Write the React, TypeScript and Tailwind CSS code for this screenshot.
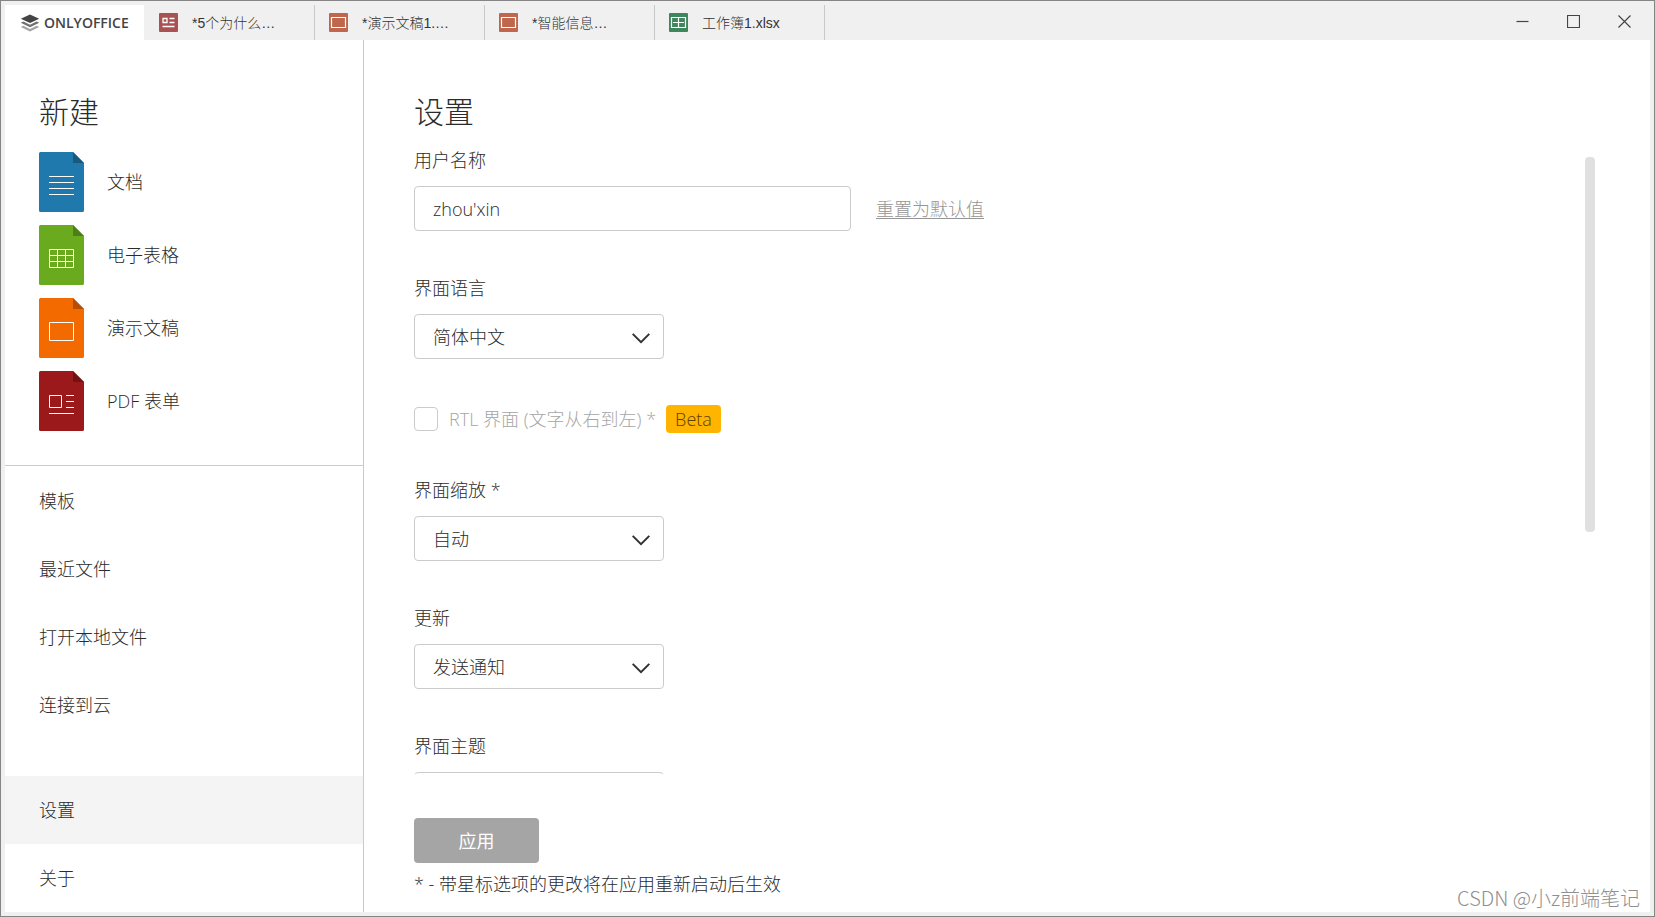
import { useState } from "react";
import type { ReactNode } from "react";

type DocKind = "word" | "sheet" | "slide" | "pdf";

const DOC_COLORS: Record<DocKind, { page: string; fold: string; tab: string }> = {
  word: { page: "#2079ad", fold: "#18597f", tab: "#446995" },
  sheet: { page: "#6aaa1f", fold: "#4e7e17", tab: "#40865c" },
  slide: { page: "#f36a00", fold: "#b34e04", tab: "#bf664c" },
  pdf: { page: "#9b191b", fold: "#701313", tab: "#aa5252" },
};

const TABS: { kind: DocKind; title: string }[] = [
  { kind: "pdf", title: "*5个为什么…" },
  { kind: "slide", title: "*演示文稿1.…" },
  { kind: "slide", title: "*智能信息…" },
  { kind: "sheet", title: "工作簿1.xlsx" },
];

const NEW_ITEMS: { kind: DocKind; label: string }[] = [
  { kind: "word", label: "文档" },
  { kind: "sheet", label: "电子表格" },
  { kind: "slide", label: "演示文稿" },
  { kind: "pdf", label: "PDF 表单" },
];

const NAV_ITEMS = ["模板", "最近文件", "打开本地文件", "连接到云"];
const BOTTOM_ITEMS = ["设置", "关于"];

function Logo() {
  return (
    <svg width="20" height="18" viewBox="0 0 20 18" aria-hidden>
      <path d="M10 9 .8 4.800 10 .4l9.200 4.400z" fill="#444" />
      <path d="M.8 8.800 3.400 7.600 10 10.700l6.600-3.100 2.600 1.200L10 13.200z" fill="#6f6f6f" />
      <path d="M.8 13 3.400 11.800 10 14.900l6.600-3.100 2.600 1.200L10 17.500z" fill="#a3a3a3" />
    </svg>
  );
}

function DocIcon({ kind }: { kind: DocKind }) {
  const { page, fold } = DOC_COLORS[kind];
  return (
    <svg width="45" height="60" viewBox="0 0 45 60" className="shrink-0" aria-hidden>
      <path d="M1.500 0H34l11 11v47.500a1.500 1.500 0 0 1-1.500 1.500h-42A1.500 1.500 0 0 1 0 58.500v-57A1.500 1.500 0 0 1 1.500 0z" fill={page} />
      <path d="M34 0l11 11H34z" fill={fold} />
      <g fill="none" stroke="#fff" strokeWidth="1">
        {kind === "word" && <path d="M10 24.500h25M10 30.500h25M10 36.500h25M10 42.500h25" />}
        {kind === "sheet" && <path d="M10.500 24.500h24v18h-24zM10 30.500h25M10 36.500h25M18.500 24v19M26.500 24v19" />}
        {kind === "slide" && <path d="M10.500 24.500h24v18h-24z" />}
        {kind === "pdf" && <path d="M10.500 24.500h12v12h-12zM27 24.500h8M27 30.500h8M27 36.500h8M10 42.500h25" />}
      </g>
    </svg>
  );
}

function TabIcon({ kind }: { kind: DocKind }) {
  return (
    <svg width="19" height="19" viewBox="0 0 19 19" className="shrink-0" aria-hidden>
      <rect width="19" height="19" rx="1" fill={DOC_COLORS[kind].tab} />
      <g fill="none" stroke="#fff">
        {kind === "slide" && <path d="M2.500 4.500h14v10h-14z" strokeWidth="1.200" />}
        {kind === "sheet" && <path d="M2.500 4.500h14v10h-14zM4 9.500h11M9.500 5v9" strokeWidth="1.200" />}
        {kind === "pdf" && (
          <path d="M4 5.500h4v4H4zM10.500 5.500h5M10.500 9.500h5M3.500 13.500h12" strokeWidth="1.300" />
        )}
      </g>
    </svg>
  );
}

function TitleBar() {
  return (
    <header className="flex h-[35px] shrink-0 text-[#444]">
      <button className="mr-px flex w-[139px] shrink-0 items-center bg-white pl-[15px]">
        <Logo />
        <span className="ml-1 font-['Open_Sans',sans-serif] text-sm font-semibold">ONLYOFFICE</span>
      </button>
      <nav className="flex min-w-0">
        {TABS.map((tab) => (
          <button
            key={tab.title}
            className="flex w-[170px] items-center gap-[14px] border-r border-[#c8c8c8] pl-[14px] font-['Liberation_Sans','Noto_Sans_CJK_SC',sans-serif] text-sm font-light whitespace-nowrap text-[#333]"
          >
            <TabIcon kind={tab.kind} />
            <span>{tab.title}</span>
          </button>
        ))}
      </nav>
      <div className="ml-auto flex">
        <WindowButton label="最小化">
          <path d="M.5 6.500h12" />
        </WindowButton>
        <WindowButton label="最大化">
          <path d="M.5.5h12v12H.5z" />
        </WindowButton>
        <WindowButton label="关闭">
          <path d="M.5.5l12 12M12.500.5l-12 12" />
        </WindowButton>
      </div>
    </header>
  );
}

function WindowButton({ label, children }: { label: string; children: ReactNode }) {
  return (
    <button aria-label={label} className="flex w-[51px] items-center justify-center pb-0.5">
      <svg width="13" height="13" viewBox="0 0 13 13" fill="none" stroke="#444" strokeWidth="1.200" aria-hidden>
        {children}
      </svg>
    </button>
  );
}

function Sidebar({ active, onSelect }: { active: string; onSelect: (item: string) => void }) {
  const renderItem = (item: string) => (
    <button
      key={item}
      onClick={() => onSelect(item)}
      className={`flex h-[68px] w-full shrink-0 items-center pl-[34px] text-left ${item === active ? "bg-[#f4f4f4]" : ""}`}
    >
      {item}
    </button>
  );

  return (
    <aside className="flex w-[359px] shrink-0 flex-col border-r border-[#cbcbcb]">
      <section className="flex flex-col border-b border-[#cbcbcb] pt-[50px] pb-[34px] pl-[34px]">
        <h2 className="mb-[18px] text-[30px] leading-[44px]">新建</h2>
        <div className="flex flex-col gap-[13px]">
          {NEW_ITEMS.map((item) => (
            <button key={item.kind} className="flex items-center gap-[23px] text-left">
              <DocIcon kind={item.kind} />
              <span>{item.label}</span>
            </button>
          ))}
        </div>
      </section>
      <nav className="flex flex-1 flex-col pt-px">
        {NAV_ITEMS.map(renderItem)}
        <div className="mt-auto">{BOTTOM_ITEMS.map(renderItem)}</div>
      </nav>
    </aside>
  );
}

function SelectField({ id, label, options }: { id: string; label: string; options: string[] }) {
  return (
    <div className="flex shrink-0 flex-col items-start gap-[15px]">
      <label htmlFor={id}>{label}</label>
      <div className="relative w-[250px]">
        <select id={id} className="h-[45px] w-full appearance-none rounded-sm border border-[#cbcbcb] bg-white pl-[18px]">
          {options.map((option) => (
            <option key={option}>{option}</option>
          ))}
        </select>
        <svg
          width="18"
          height="11"
          viewBox="0 0 18 11"
          fill="none"
          stroke="#333"
          strokeWidth="2"
          className="pointer-events-none absolute top-[19px] right-[14px]"
          aria-hidden
        >
          <path d="M.7.900 9 9.200 17.300.9" />
        </svg>
      </div>
    </div>
  );
}

function Settings() {
  const [userName, setUserName] = useState("zhou'xin");

  return (
    <main className="flex min-w-0 flex-1 flex-col pt-[50px] pl-[50px]">
      <h1 className="mb-[15px] text-[30px] leading-[44px]">设置</h1>
      <div className="flex min-h-0 flex-1 pr-[55px]">
        <div className="flex flex-1 flex-col gap-[46px] overflow-y-auto [scrollbar-width:none]">
          <div className="flex shrink-0 flex-col items-start gap-[15px]">
            <label htmlFor="user-name">用户名称</label>
            <div className="flex items-center gap-[25px]">
              <input
                id="user-name"
                value={userName}
                onChange={(e) => setUserName(e.target.value)}
                className="h-[45px] w-[437px] rounded-sm border border-[#cbcbcb] px-[18px]"
              />
              <a href="#" className="text-[#959595] underline underline-offset-2">
                重置为默认值
              </a>
            </div>
          </div>
          <SelectField id="language" label="界面语言" options={["简体中文", "English"]} />
          <div className="flex h-7 shrink-0 items-center">
            <input
              id="rtl"
              type="checkbox"
              disabled
              className="size-6 appearance-none rounded-sm border border-[#cbcbcb]"
            />
            <label htmlFor="rtl" className="ml-[11px] text-[#a5a5a5]">
              RTL 界面 (文字从右到左) *
            </label>
            <span className="ml-[10px] rounded-sm bg-[#ffb400] px-[9px] leading-7 text-[#5f4300]">Beta</span>
          </div>
          <SelectField id="scale" label="界面缩放 *" options={["自动", "100%", "150%", "200%"]} />
          <SelectField id="updates" label="更新" options={["发送通知", "自动安装", "从不"]} />
          <SelectField id="theme" label="界面主题" options={["与系统相同", "浅色", "深色"]} />
        </div>
        {/* 滚动条 */}
        <div className="mt-2 h-[60%] w-[10px] rounded-sm bg-[#e0e0e0]" aria-hidden />
      </div>
      <footer className="mt-11 flex flex-col items-start gap-[10px] pb-[17px]">
        <button className="h-[45px] w-[125px] rounded-sm bg-[#a5a5a5] font-normal text-white">应用</button>
        <p>* - 带星标选项的更改将在应用重新启动后生效</p>
      </footer>
    </main>
  );
}

export default function App() {
  const [active, setActive] = useState("设置");

  return (
    <div className="relative flex h-screen flex-col border border-[#868484] bg-[#f0f0f0] p-1">
      <TitleBar />
      <div className="flex min-h-0 flex-1 bg-white font-['Open_Sans','Noto_Sans_CJK_SC',sans-serif] text-lg leading-[22px] font-light text-[#2b2b2b]">
        <Sidebar active={active} onSelect={setActive} />
        <Settings />
      </div>
      <span className="pointer-events-none absolute right-[14px] bottom-1 font-['Noto_Sans_CJK_SC',sans-serif] text-xl font-light text-[#8f8f8f]">
        CSDN @小z前端笔记
      </span>
    </div>
  );
}
